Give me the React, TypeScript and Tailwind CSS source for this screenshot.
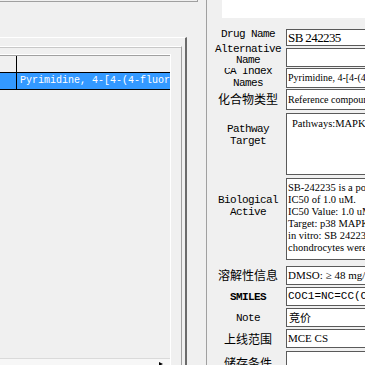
import React from "react";

const mono = "font-['Liberation_Mono',monospace]";
const serif = "font-['Liberation_Serif',serif]";
const cjk = "font-['Noto_Sans_CJK_SC',sans-serif]";
const label = `w-[74px] shrink-0 text-center text-[11px] tracking-[-0.6px] text-black ${mono}`;

const bioLines = [
	"SB-242235 is a potent and selective p38 MAPK inhibitor with an",
	"IC50 of 1.0 uM.",
	"IC50 Value: 1.0 uM",
	"Target: p38 MAPK",
	"in vitro: SB 242235 inhibited IL-1-stimulated NO production",
	"chondrocytes were treated with SB 242235",
];

function Box({
	className,
	children,
}: {
	className: string;
	children?: React.ReactNode;
}) {
	return (
		<div
			className={`w-[100px] shrink-0 overflow-hidden whitespace-nowrap border border-[#5a5a5a] bg-white text-black ${className}`}
		>
			{children}
		</div>
	);
}

export default function App() {
	return (
		<div className="flex h-[365px] w-[365px] overflow-hidden bg-[#f0f0f0]">
			{/* left: result list */}
			<div className="flex w-[206px] shrink-0 flex-col">
				<div className="h-[2px] w-[198px] border-r border-b border-[#a0a0a0]" />
				<div className="mt-[35px] flex w-[187px] flex-1 flex-col border-t border-r-2 border-t-white border-r-[#6b6b6b] pt-[8px]">
					<div className="flex w-[182px] flex-1 flex-col border-t border-r border-t-white border-r-[#a0a0a0]">
						<div className="flex flex-1 flex-col border-t border-[#c8c8c8] pt-[6px]">
							<div className="flex w-[171px] flex-1 flex-col border-t border-r border-t-white border-r-white">
								<div className="flex flex-1 flex-col border-t border-[#a0a0a0]">
									<div className="flex h-[17px] border-b border-black">
										<div className="w-[17px] border-r border-black" />
										<div className="flex-1" />
									</div>
									<div className="flex h-[17px] border-b border-black bg-[#3399ff]">
										<div className="w-[17px] border-r border-black" />
										<div
											className={`flex-1 overflow-hidden whitespace-nowrap pl-[3px] text-[10px] leading-[16px] text-white ${mono}`}
										>
											Pyrimidine, 4-[4-(4-fluorophenyl)-1-(4-piperidinyl)
										</div>
									</div>
									<div className="flex-1" />
									<div className="relative h-[7px] border-t border-[#dadada] bg-[#f7f7f7]">
										<svg
											className="absolute top-[3px] left-[159px]"
											width="4"
											height="4"
											viewBox="0 0 4 4"
										>
											<path d="M0 0 L4 2 L0 4 Z" fill="#000" />
										</svg>
									</div>
								</div>
							</div>
						</div>
					</div>
				</div>
			</div>

			<div className="w-px shrink-0 bg-[#a0a0a0]" />

			{/* right: detail form */}
			<div className="flex flex-1 flex-col pl-[4px]">
				<div className="ml-[11px] h-[18px] shrink-0 bg-white" />

				<div className="mt-[11px] flex h-[17px] shrink-0 gap-[1px]">
					<div className={`${label} leading-[12px]`}>
						<div className="-mt-[1px]">Drug Name</div>
					</div>
					<Box className={`pl-[1px] text-[13px] leading-[15px] tracking-[-0.6px] ${serif}`}>
						SB 242235
					</Box>
				</div>

				<div className="mt-[2px] flex h-[19px] shrink-0 gap-[1px]">
					<div className={`${label} leading-[11px]`}>
						<div className="-mt-[4px]">
							Alternative
							<br />
							Name
						</div>
					</div>
					<Box className="" />
				</div>

				<div className="mt-[1px] flex h-[20px] shrink-0 gap-[1px]">
					<div className={`${label} overflow-hidden leading-[12px]`}>
						<div className="-mt-[3px]">
							CA Index
							<br />
							Names
						</div>
					</div>
					<Box className={`pl-[1px] text-[10px] leading-[18px] ${serif}`}>
						Pyrimidine, 4-[4-(4-fluorophenyl)
					</Box>
				</div>

				<div className="mt-[1px] flex h-[21px] shrink-0 gap-[1px]">
					<div className={`w-[74px] shrink-0 text-center text-[12px] leading-[14px] ${cjk}`}>
						<div className="mt-[3px]">化合物类型</div>
					</div>
					<Box className={`pl-[1px] text-[10px] leading-[19px] ${serif}`}>
						Reference compound
					</Box>
				</div>

				<div className="mt-[3px] flex h-[62px] shrink-0 gap-[1px]">
					<div className={`${label} leading-[12px]`}>
						<div className="mt-[10px]">
							Pathway
							<br />
							Target
						</div>
					</div>
					<Box className={`pt-[4px] pl-[5px] text-[10.5px] leading-[12px] ${serif}`}>
						Pathways:MAPK/ERK Pathway
					</Box>
				</div>

				<div className="mt-[3px] flex h-[82px] shrink-0 gap-[1px]">
					<div className={`${label} leading-[12px]`}>
						<div className="mt-[16px]">
							Biological
							<br />
							Active
						</div>
					</div>
					<Box className={`pt-[3px] pl-[1px] text-[10.5px] leading-[12px] ${serif}`}>
						{bioLines.map((l) => (
							<div key={l}>{l}</div>
						))}
					</Box>
				</div>

				<div className="mt-[6px] flex h-[19px] shrink-0 gap-[1px]">
					<div className={`w-[74px] shrink-0 text-center text-[12px] leading-[14px] ${cjk}`}>
						<div className="mt-[2px]">溶解性信息</div>
					</div>
					<Box className={`pl-[1px] text-[11px] leading-[17px] ${serif}`}>
						DMSO: ≥ 48 mg/mL
					</Box>
				</div>

				<div className="mt-[2px] flex h-[19px] shrink-0 gap-[1px]">
					<div className={`${label} leading-[12px] font-bold`}>
						<div className="mt-[4px]">SMILES</div>
					</div>
					<Box className={`pl-[1px] text-[11px] leading-[17px] ${mono}`}>
						COC1=NC=CC(C2=C(C3=CC=C(F)C=C3)
					</Box>
				</div>

				<div className="mt-[2px] flex h-[19px] shrink-0 gap-[1px]">
					<div className={`${label} leading-[12px]`}>
						<div className="mt-[4px]">Note</div>
					</div>
					<Box className={`pl-[2px] text-[11px] leading-[17px] ${cjk}`}>竞价</Box>
				</div>

				<div className="mt-[2px] flex h-[19px] shrink-0 gap-[1px]">
					<div className={`w-[74px] shrink-0 text-center text-[12px] leading-[14px] ${cjk}`}>
						<div className="mt-[3px]">上线范围</div>
					</div>
					<Box className={`pl-[1px] text-[11px] leading-[17px] ${serif}`}>MCE CS</Box>
				</div>

				<div className="mt-[3px] flex h-[30px] shrink-0 gap-[1px]">
					<div className={`w-[74px] shrink-0 text-center text-[12px] leading-[14px] ${cjk}`}>
						<div className="mt-[5px]">储存条件</div>
					</div>
					<Box className="" />
				</div>
			</div>
		</div>
	);
}
